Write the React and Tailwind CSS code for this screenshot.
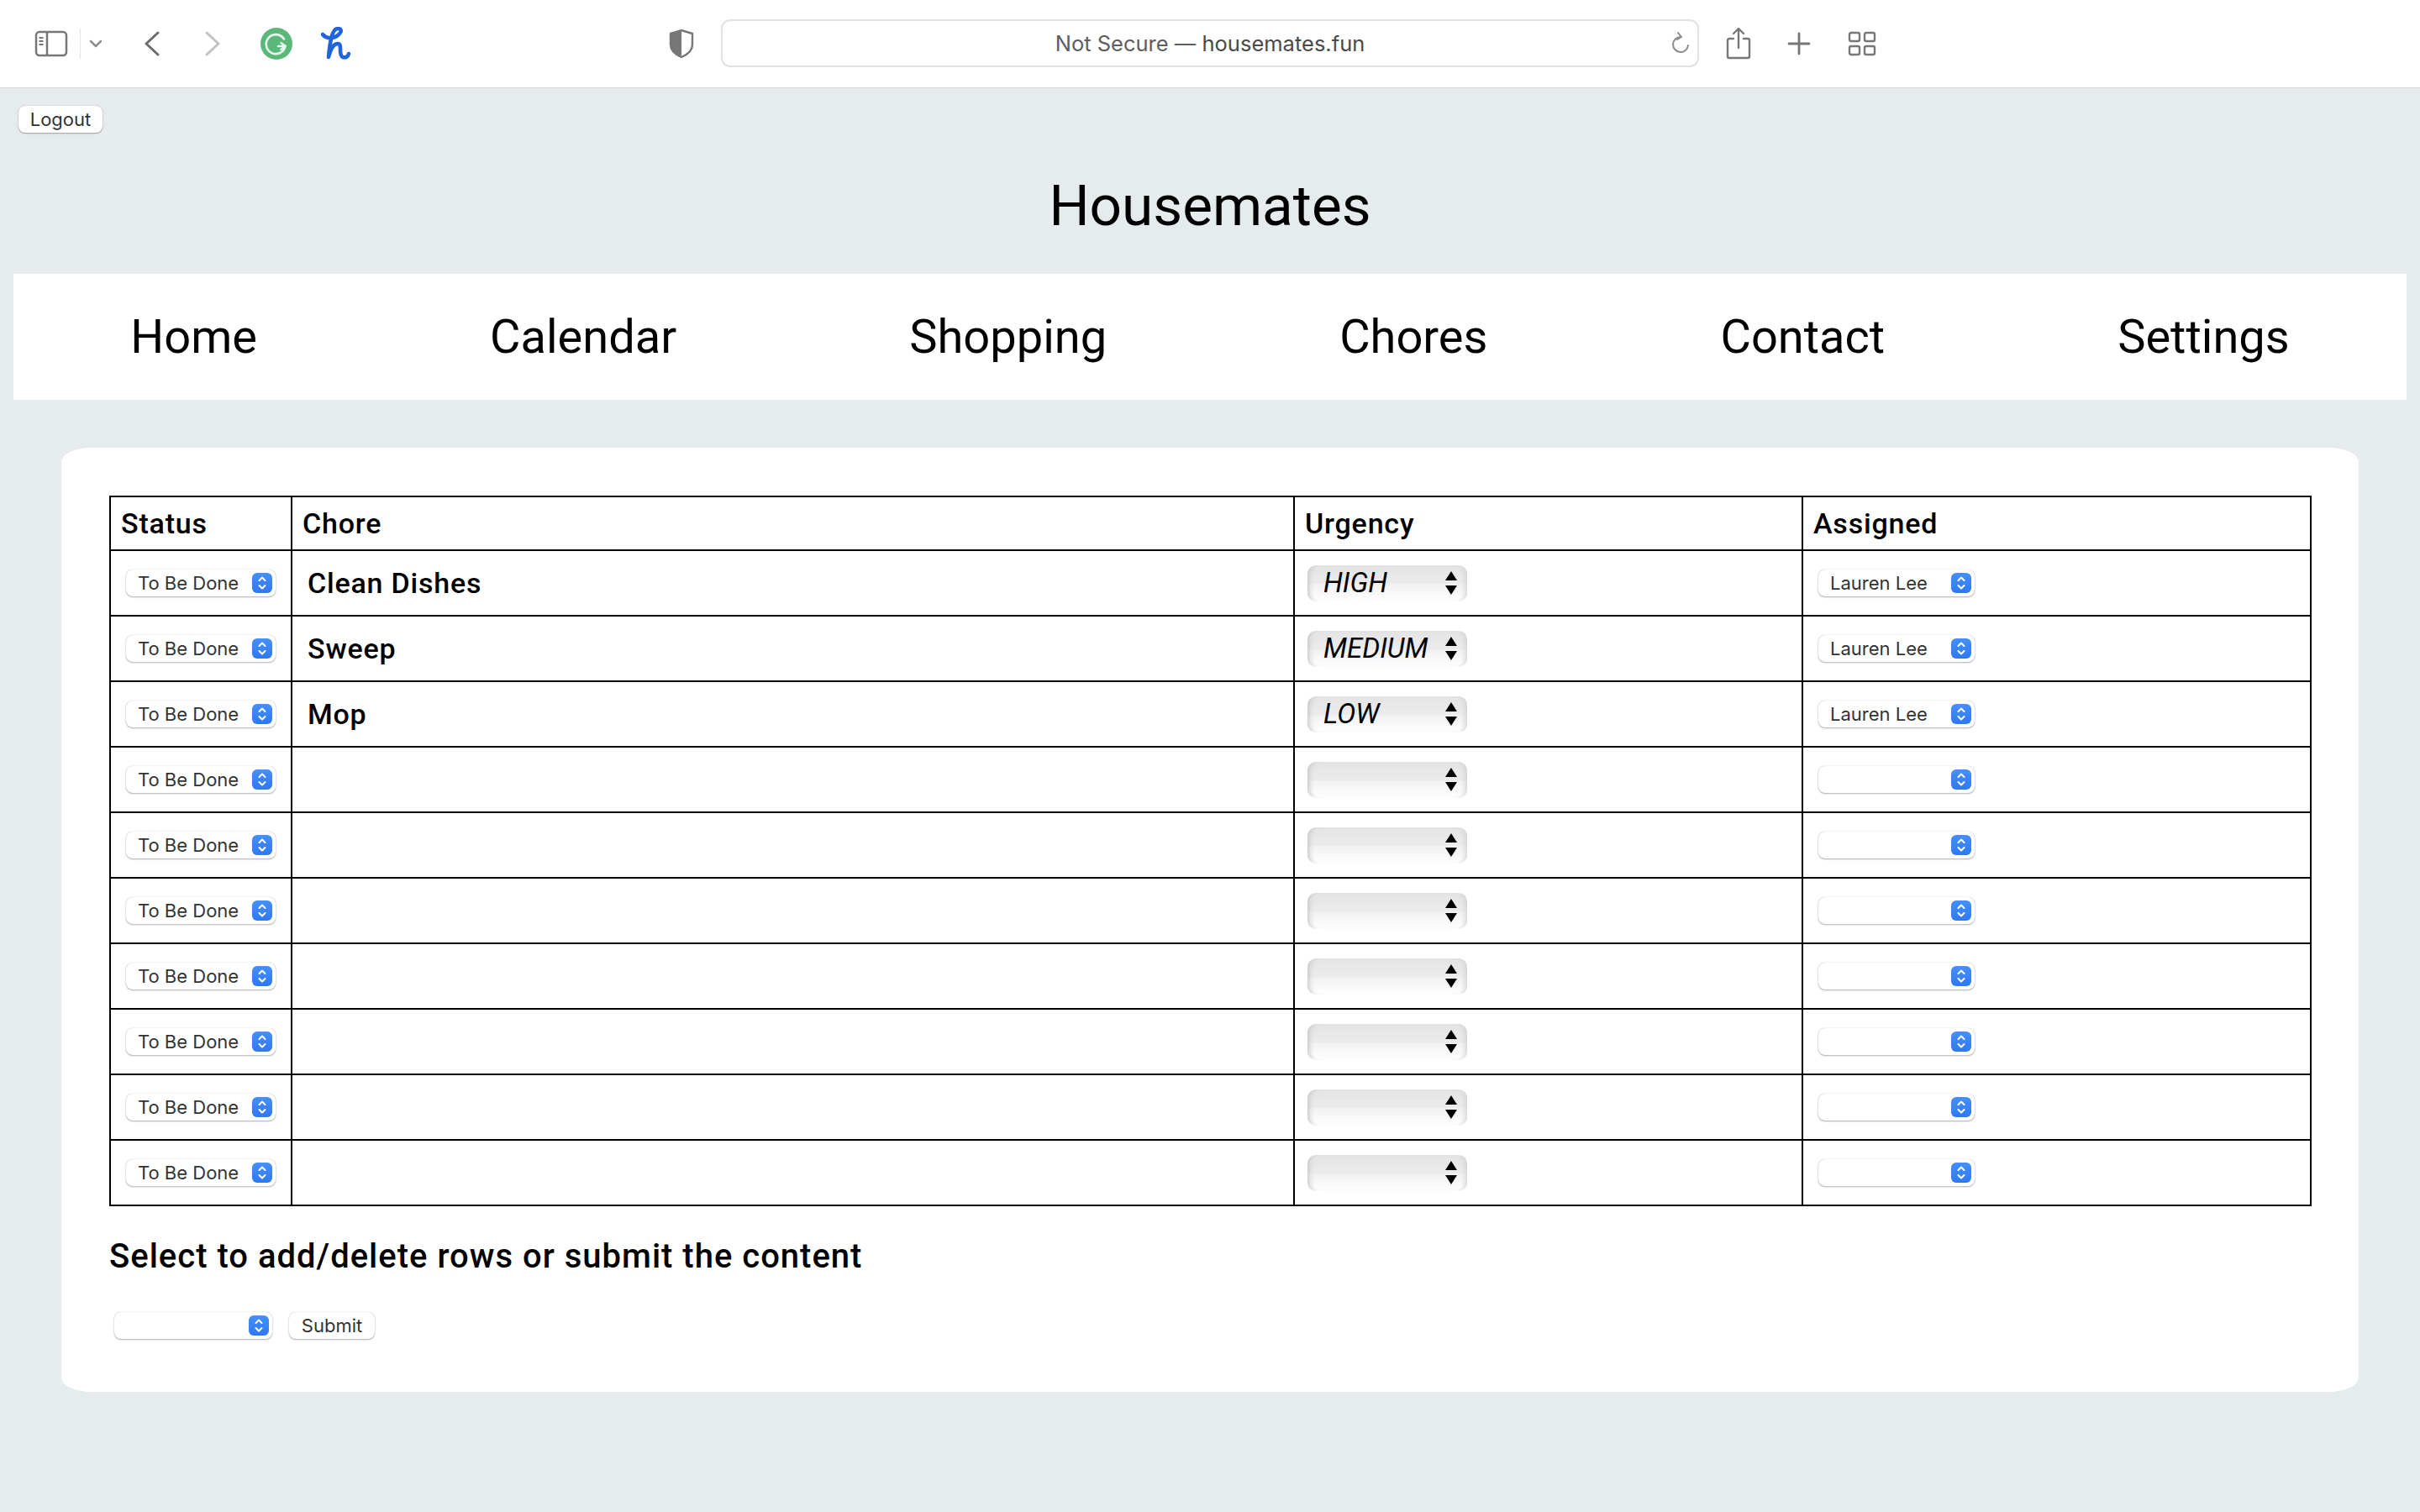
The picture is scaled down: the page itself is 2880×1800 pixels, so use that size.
import React from 'react';

const links = ['Home', 'Calendar', 'Shopping', 'Chores', 'Contact', 'Settings'];

const chores = [
  { name: 'Clean Dishes', urgency: 'HIGH', assigned: 'Lauren Lee' },
  { name: 'Sweep', urgency: 'MEDIUM', assigned: 'Lauren Lee' },
  { name: 'Mop', urgency: 'LOW', assigned: 'Lauren Lee' },
  {}, {}, {}, {}, {}, {}, {},
];

function Stepper() {
  return (
    <span className="flex h-6 w-6 shrink-0 items-center justify-center rounded-[6px] bg-gradient-to-b from-[#4590f9] to-[#2f78f3]">
      <svg width="12" height="18" viewBox="0 0 12 18" fill="none" stroke="#fff" strokeWidth="2" strokeLinecap="round" strokeLinejoin="round">
        <path d="M2.5 6 6 2.5 9.5 6" />
        <path d="M2.5 12 6 15.5 9.5 12" />
      </svg>
    </span>
  );
}

function MacSelect({ value, className = '' }) {
  return (
    <div className={`flex h-8 items-center justify-between rounded-[8px] bg-white pl-[14px] pr-1 text-[22px] text-[#333] shadow-[0_0_1px_rgba(0,0,0,0.3),0_1px_2px_rgba(0,0,0,0.3)] ${className}`}>
      <span className="whitespace-nowrap font-['Inter',sans-serif]">{value}</span>
      <Stepper />
    </div>
  );
}

function UrgencySelect({ value }) {
  return (
    <div className="flex h-[43px] w-[190px] items-center justify-between rounded-[10px] bg-[linear-gradient(to_bottom,#e4e4e4_0%,#ebebeb_50%,#f1f1f1_52%,#ffffff_100%)] pl-[19px] pr-3 shadow-[inset_7px_0_6px_-5px_#c4c4c4,inset_-7px_0_6px_-5px_#d0d0d0]">
      <span className="text-[33px] italic text-black">{value}</span>
      <svg width="14" height="28" viewBox="0 0 14 28" fill="#000" className="shrink-0">
        <path d="M7 0 14 11H0z" />
        <path d="M0 17h14L7 28z" />
      </svg>
    </div>
  );
}

function Toolbar() {
  return (
    <div className="flex h-[105px] items-center border-b border-[#d9d9d9] bg-white pb-[1px] text-[#6e6e6e]">
      <svg width="40" height="32" viewBox="0 0 40 32" fill="none" stroke="#777" strokeWidth="2.5" className="ml-[41px]">
        <rect x="2" y="2" width="36" height="28" rx="4" />
        <path d="M15 2v28" />
        <path d="M5.5 9h5M5.5 13h5M5.5 17h5" strokeWidth="2" />
      </svg>
      <div className="ml-[14px] h-9 w-[1px] bg-[#e6e6e6]" />
      <svg width="16" height="10" viewBox="0 0 16 10" fill="none" stroke="#8e8e8e" strokeWidth="2.5" strokeLinecap="round" strokeLinejoin="round" className="ml-[10px]">
        <path d="M2 2l6 6 6-6" />
      </svg>
      <svg width="18" height="30" viewBox="0 0 18 30" fill="none" stroke="#6b6b6b" strokeWidth="3" strokeLinecap="round" strokeLinejoin="round" className="ml-[50px]">
        <path d="M16 2 2 15l14 13" />
      </svg>
      <svg width="18" height="30" viewBox="0 0 18 30" fill="none" stroke="#c2c2c2" strokeWidth="3" strokeLinecap="round" strokeLinejoin="round" className="ml-[54px]">
        <path d="M2 2l14 13L2 28" />
      </svg>
      <svg width="38" height="38" viewBox="0 0 38 38" fill="none" className="ml-[48px]">
        <circle cx="19" cy="19" r="19" fill="#5bb87b" />
        <path d="M28 13.5A11.5 11.5 0 1 0 29.5 22H21" stroke="#e9f6ee" strokeWidth="2.6" strokeLinecap="round" />
        <path d="M24.5 18l5 4-5 4" stroke="#e9f6ee" strokeWidth="2.4" strokeLinecap="round" strokeLinejoin="round" />
      </svg>
      <svg width="36" height="40" viewBox="0 0 36 40" fill="none" stroke="#1f63de" strokeWidth="4.6" strokeLinecap="round" strokeLinejoin="round" className="ml-[34px]">
        <path d="M2 9C6 14 14 15 20 10C26 5 24 2 20 2C14 2 11 14 9 36C12 24 16 20 20 20C26 20 20 33 26 36C29 37 32 36 33 32" />
      </svg>
      <svg width="30" height="34" viewBox="0 0 30 34" className="ml-[378px]">
        <path d="M15 1 28 5v13c0 8-6 12-13 15C8 30 2 26 2 18V5z" fill="#fff" stroke="#777" strokeWidth="2.4" strokeLinejoin="round" />
        <path d="M15 1 2 5v13c0 8 6 12 13 15z" fill="#777" />
      </svg>
      <div className="relative ml-[32px] flex h-[57px] w-[1164px] items-center justify-center rounded-[11px] border-2 border-[#e2e2e2] pt-[2px] text-[25.5px] text-[#5e5e5e] font-['Inter',sans-serif]">
        <span>Not Secure — <span className="text-[#4a4a4a]">housemates.fun</span></span>
        <svg width="22" height="28" viewBox="0 0 22 28" fill="none" stroke="#8a8a8a" strokeWidth="2" strokeLinecap="round" strokeLinejoin="round" className="absolute right-[9px] top-[13px]">
          <path d="M11 6a9 9 0 1 0 9 10" />
          <path d="M8 1l4 5-5 3" />
        </svg>
      </div>
      <svg width="30" height="38" viewBox="0 0 30 38" fill="none" stroke="#777" strokeWidth="2.4" strokeLinecap="round" strokeLinejoin="round" className="ml-[32px]">
        <path d="M9 13H4a2 2 0 0 0-2 2v19a2 2 0 0 0 2 2h22a2 2 0 0 0 2-2V15a2 2 0 0 0-2-2h-5" />
        <path d="M15 24V2M9 7l6-6 6 6" />
      </svg>
      <svg width="28" height="28" viewBox="0 0 28 28" fill="none" stroke="#777" strokeWidth="2.8" strokeLinecap="round" className="ml-[43px]">
        <path d="M14 2v24M2 14h24" />
      </svg>
      <svg width="34" height="30" viewBox="0 0 34 30" fill="none" stroke="#777" strokeWidth="2.4" className="ml-[44px]">
        <rect x="2" y="2" width="12" height="10" rx="2" />
        <rect x="20" y="2" width="12" height="10" rx="2" />
        <rect x="2" y="18" width="12" height="10" rx="2" />
        <rect x="20" y="18" width="12" height="10" rx="2" />
      </svg>
    </div>
  );
}

export default function App() {
  return (
    <div className="min-h-screen bg-[#e6ebee] font-['Roboto',sans-serif] text-black">
      <Toolbar />

      <button className="ml-[22px] mt-[21px] block h-8 w-[100px] rounded-[8px] bg-white text-[22px] text-[#333] shadow-[0_0_1px_rgba(0,0,0,0.3),0_1px_2px_rgba(0,0,0,0.3)] font-['Inter',sans-serif]">
        Logout
      </button>

      <h1 className="mt-[44px] text-center text-[67.5px] font-[450] leading-[86px]">Housemates</h1>

      <nav className="mx-4 mt-[38px] flex h-[150px] items-center justify-center bg-white">
        {links.map((link) => (
          <a key={link} className="px-[138.5px] text-[56px]">{link}</a>
        ))}
      </nav>

      <main className="ml-[73px] mt-[57px] h-[1124px] w-[2734px] rounded-[36px/17px] bg-white px-[57px] pt-[57px]">
        <table className="w-[2619px] table-fixed border-2 border-black text-left">
          <colgroup>
            <col className="w-[216px]" />
            <col className="w-[1193px]" />
            <col className="w-[605px]" />
            <col className="w-[605px]" />
          </colgroup>
          <thead>
            <tr className="h-[64px] text-[34px] font-medium tracking-[0.8px]">
              <th className="border-2 border-black px-3 font-medium">Status</th>
              <th className="border-2 border-black px-3 font-medium">Chore</th>
              <th className="border-2 border-black px-3 font-medium">Urgency</th>
              <th className="border-2 border-black px-3 font-medium">Assigned</th>
            </tr>
          </thead>
          <tbody>
            {chores.map((chore, i) => (
              <tr key={i} className="h-[78px]">
                <td className="border-2 border-black pl-[18px]">
                  <MacSelect value="To Be Done" className="w-[178px]" />
                </td>
                <td className="border-2 border-black pl-[18px] text-[34px] font-medium tracking-[0.8px]">{chore.name}</td>
                <td className="border-2 border-black pl-[15px]">
                  <UrgencySelect value={chore.urgency} />
                </td>
                <td className="border-2 border-black pl-[18px]">
                  <MacSelect value={chore.assigned} className="w-[186px]" />
                </td>
              </tr>
            ))}
          </tbody>
        </table>

        <p className="mt-[36px] text-[40px] font-medium leading-[48px] tracking-[1px]">Select to add/delete rows or submit the content</p>

        <div className="ml-[6px] mt-[42px] flex gap-5">
          <MacSelect className="w-[188px]" />
          <button className="h-8 w-[102px] rounded-[8px] bg-white text-[22px] text-[#333] shadow-[0_0_1px_rgba(0,0,0,0.3),0_1px_2px_rgba(0,0,0,0.3)] font-['Inter',sans-serif]">
            Submit
          </button>
        </div>
      </main>
    </div>
  );
}
